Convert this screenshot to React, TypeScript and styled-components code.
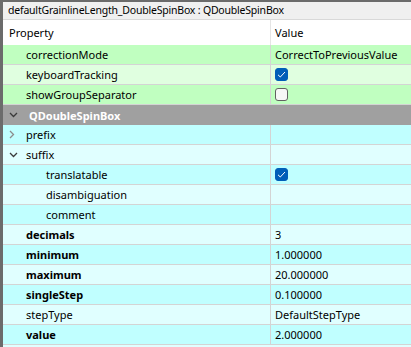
import styled, { createGlobalStyle } from "styled-components"

const GlobalStyle = createGlobalStyle`
  html, body {
    margin: 0;
    padding: 0;
    background: #ffffff;
  }
  body {
    font-family: "Noto Sans", "Open Sans", sans-serif;
    font-size: 11px;
    color: #000000;
  }
`

const Frame = styled.div`
  width: 411px;
  height: 347px;
  box-sizing: border-box;
  border-top: 2px solid #6b6b6b;
  border-left: 3px solid #6b6b6b;
  background: #e0ffff;
  overflow: hidden;
`

const TitleBar = styled.div`
  height: 17px;
  line-height: 17px;
  padding-left: 5px;
  font-size: 10.5px;
  letter-spacing: -0.2px;
  background: #f0f0f0;
  border-bottom: 1px solid #d9d9d9;
  white-space: nowrap;
`

const HeaderRow = styled.div`
  display: grid;
  grid-template-columns: 268px 1fr;
  height: 25px;
  background: #ffffff;
  > div {
    line-height: 25px;
    padding-left: 6px;
  }
  > div:first-child {
    border-right: 1px solid #e5e5e5;
  }
  > div:last-child {
    padding-left: 4px;
  }
`

const Row = styled.div<{ $bg: string }>`
  display: grid;
  grid-template-columns: 268px 1fr;
  height: 20px;
  box-sizing: border-box;
  background: ${(p) => p.$bg};
  border-bottom: 1px solid #d4d4d4;
`

const NameCell = styled.div<{ $indent: number; $bold?: boolean }>`
  display: flex;
  align-items: center;
  position: relative;
  box-sizing: border-box;
  padding-left: ${(p) => p.$indent}px;
  border-right: 1px solid #d4d4d4;
  font-weight: ${(p) => (p.$bold ? 700 : 400)};
  white-space: nowrap;
`

const ValueCell = styled.div`
  display: flex;
  align-items: center;
  padding-left: 4px;
  white-space: nowrap;
`

const Expander = styled.span`
  position: absolute;
  left: 6px;
  top: 0;
  height: 19px;
  display: flex;
  align-items: center;
`

const CategoryRow = styled.div`
  display: flex;
  align-items: center;
  position: relative;
  height: 20px;
  padding-left: 26px;
  background: #a0a0a0;
  color: #ffffff;
  font-weight: 700;
`

const Check = styled.span<{ $on?: boolean }>`
  width: 13px;
  height: 13px;
  box-sizing: border-box;
  border-radius: 3px;
  display: flex;
  align-items: center;
  justify-content: center;
  background: ${(p) => (p.$on ? "#005fb8" : "#f7f7f7")};
  border: 1px solid ${(p) => (p.$on ? "#005fb8" : "#616161")};
`

const Chevron = ({ open, color }: { open: boolean; color: string }) =>
  open ? (
    <svg width="9" height="6" viewBox="0 0 9 6">
      <path d="M1 1 L4.5 4.5 L8 1" fill="none" stroke={color} strokeWidth="1.3" />
    </svg>
  ) : (
    <svg width="6" height="9" viewBox="0 0 6 9">
      <path d="M1 1 L4.5 4.5 L1 8" fill="none" stroke={color} strokeWidth="1.3" />
    </svg>
  )

const CheckMark = () => (
  <svg width="9" height="7" viewBox="0 0 9 7">
    <path d="M1 3.8 L3.3 6 L8 1" fill="none" stroke="#ffffff" strokeWidth="1" />
  </svg>
)

type Prop = {
  name: string
  value?: string
  check?: boolean
  bg: string
  indent?: number
  bold?: boolean
  expander?: "open" | "closed"
}

const GREEN = "#c0ffc0"
const LIGHT_GREEN = "#e0ffe0"
const CYAN = "#c0ffff"
const LIGHT_CYAN = "#e0ffff"

const top: Prop[] = [
  { name: "correctionMode", value: "CorrectToPreviousValue", bg: GREEN },
  { name: "keyboardTracking", check: true, bg: LIGHT_GREEN },
  { name: "showGroupSeparator", check: false, bg: GREEN },
]

const spin: Prop[] = [
  { name: "prefix", bg: CYAN, expander: "closed" },
  { name: "suffix", bg: LIGHT_CYAN, expander: "open" },
  { name: "translatable", check: true, bg: CYAN, indent: 43 },
  { name: "disambiguation", bg: LIGHT_CYAN, indent: 43 },
  { name: "comment", bg: CYAN, indent: 43 },
  { name: "decimals", value: "3", bg: LIGHT_CYAN, bold: true },
  { name: "minimum", value: "1.000000", bg: CYAN, bold: true },
  { name: "maximum", value: "20.000000", bg: LIGHT_CYAN, bold: true },
  { name: "singleStep", value: "0.100000", bg: CYAN, bold: true },
  { name: "stepType", value: "DefaultStepType", bg: LIGHT_CYAN },
  { name: "value", value: "2.000000", bg: CYAN, bold: true },
]

const PropRow = ({ p }: { p: Prop }) => (
  <Row $bg={p.bg}>
    <NameCell $indent={p.indent ?? 23} $bold={p.bold}>
      {p.expander && (
        <Expander>
          <Chevron
            open={p.expander === "open"}
            color={p.expander === "open" ? "#3c3c3c" : "#8c8c8c"}
          />
        </Expander>
      )}
      {p.name}
    </NameCell>
    <ValueCell>
      {p.check !== undefined ? (
        <Check $on={p.check}>{p.check && <CheckMark />}</Check>
      ) : (
        p.value
      )}
    </ValueCell>
  </Row>
)

const App = () => {
  return (
    <>
      <GlobalStyle />
      <Frame>
        <TitleBar>defaultGrainlineLength_DoubleSpinBox : QDoubleSpinBox</TitleBar>
        <HeaderRow>
          <div>Property</div>
          <div>Value</div>
        </HeaderRow>
        {top.map((p) => (
          <PropRow key={p.name} p={p} />
        ))}
        <CategoryRow>
          <Expander>
            <Chevron open color="#3a3a3a" />
          </Expander>
          QDoubleSpinBox
        </CategoryRow>
        {spin.map((p) => (
          <PropRow key={p.name} p={p} />
        ))}
      </Frame>
    </>
  )
}

export default App
